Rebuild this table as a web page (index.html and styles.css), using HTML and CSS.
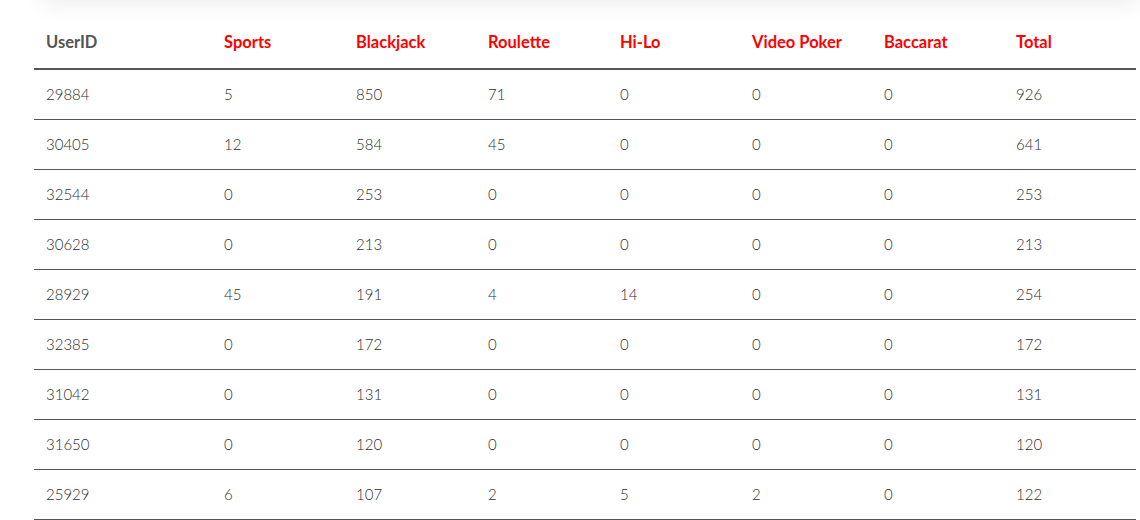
FILE: index.html
```html
<!DOCTYPE html>
<html>
<head>
<meta charset="utf-8">
<link rel="stylesheet" href="styles.css">
</head>
<body>
<div class="card-above"></div>
<main class="page">
  <table class="stats">
    <colgroup>
      <col class="c-id"><col class="c"><col class="c"><col class="c"><col class="c"><col class="c"><col class="c"><col class="c">
    </colgroup>
    <thead>
      <tr>
        <th class="plain">UserID</th>
        <th>Sports</th>
        <th>Blackjack</th>
        <th>Roulette</th>
        <th>Hi-Lo</th>
        <th>Video Poker</th>
        <th>Baccarat</th>
        <th>Total</th>
      </tr>
    </thead>
    <tbody>
      <tr><td>29884</td><td>5</td><td>850</td><td>71</td><td>0</td><td>0</td><td>0</td><td>926</td></tr>
      <tr><td>30405</td><td>12</td><td>584</td><td>45</td><td>0</td><td>0</td><td>0</td><td>641</td></tr>
      <tr><td>32544</td><td>0</td><td>253</td><td>0</td><td>0</td><td>0</td><td>0</td><td>253</td></tr>
      <tr><td>30628</td><td>0</td><td>213</td><td>0</td><td>0</td><td>0</td><td>0</td><td>213</td></tr>
      <tr><td>28929</td><td>45</td><td>191</td><td>4</td><td>14</td><td>0</td><td>0</td><td>254</td></tr>
      <tr><td>32385</td><td>0</td><td>172</td><td>0</td><td>0</td><td>0</td><td>0</td><td>172</td></tr>
      <tr><td>31042</td><td>0</td><td>131</td><td>0</td><td>0</td><td>0</td><td>0</td><td>131</td></tr>
      <tr><td>31650</td><td>0</td><td>120</td><td>0</td><td>0</td><td>0</td><td>0</td><td>120</td></tr>
      <tr><td>25929</td><td>6</td><td>107</td><td>2</td><td>5</td><td>2</td><td>0</td><td>122</td></tr>
    </tbody>
  </table>
</main>
</body>
</html>
```

FILE: styles.css
```css
html, body {
  margin: 0;
  padding: 0;
  background: #ffffff;
  overflow: hidden;
}

body {
  font-family: Lato, "Liberation Sans", sans-serif;
  color: #555555;
}

.card-above {
  height: 40px;
  margin: -40px 0 0 40px;
  box-shadow: 0 4px 22px rgba(0, 0, 0, 0.07);
  background: #ffffff;
  border-radius: 8px;
}

.page {
  padding: 19px 4px 0 34px;
}

.stats {
  border-collapse: separate;
  border-spacing: 0;
  width: 1102px;
  table-layout: fixed;
}

.c-id { width: 178px; }
.c { width: 132px; }

.stats th {
  text-align: left;
  font-weight: 700;
  font-size: 16.5px;
  line-height: 17px;
  padding: 15px 12px 17px;
  color: #ff0000;
  border-bottom: 2px solid #555555;
}

.stats th.plain {
  color: #555555;
}

.stats td {
  text-align: left;
  font-weight: 300;
  font-size: 15px;
  line-height: 17px;
  padding: 16px 12px;
  color: #2e2e2e;
  border-bottom: 1px solid #555555;
}
```
